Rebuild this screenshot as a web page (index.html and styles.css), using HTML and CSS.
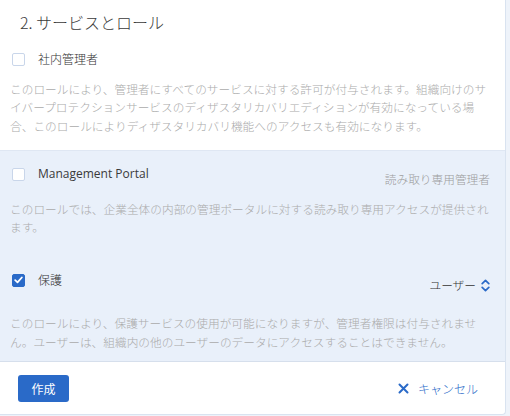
FILE: index.html
```html
<!DOCTYPE html>
<html lang="ja">
<head>
<meta charset="utf-8">
<link rel="stylesheet" href="styles.css">
</head>
<body>
<div class="panel">
  <h2 class="title">2. サービスとロール</h2>

  <section class="role role-first">
    <div class="row">
      <span class="cb"></span>
      <span class="label">社内管理者</span>
    </div>
    <p class="desc">このロールにより、管理者にすべてのサービスに対する許可が付与されます。組織向けのサ<br>イバープロテクションサービスのディザスタリカバリエディションが有効になっている場<br>合、このロールによりディザスタリカバリ機能へのアクセスも有効になります。</p>
  </section>

  <div class="blue">
    <section class="role role-mp">
      <div class="row">
        <span class="cb"></span>
        <span class="label label-en">Management Portal</span>
        <span class="right right-mp">読み取り専用管理者</span>
      </div>
      <p class="desc">このロールでは、企業全体の内部の管理ポータルに対する読み取り専用アクセスが提供され<br>ます。</p>
    </section>

    <section class="role role-protect">
      <div class="row">
        <span class="cb cb-on">
          <svg width="9" height="8" viewBox="0 0 9 8"><path d="M1.2 4.2 L3.5 6.3 L7.8 1.5" fill="none" stroke="#fff" stroke-width="1.8" stroke-linecap="round" stroke-linejoin="round"/></svg>
        </span>
        <span class="label">保護</span>
        <span class="right right-user">ユーザー
          <svg class="updown" width="9" height="13" viewBox="0 0 9 13"><path d="M1.2 4.6 L4.5 1.4 L7.8 4.6 M1.2 8.4 L4.5 11.6 L7.8 8.4" fill="none" stroke="#2a6ac8" stroke-width="1.7" stroke-linecap="round" stroke-linejoin="round"/></svg>
        </span>
      </div>
      <p class="desc">このロールにより、保護サービスの使用が可能になりますが、管理者権限は付与されませ<br>ん。ユーザーは、組織内の他のユーザーのデータにアクセスすることはできません。</p>
    </section>
  </div>

  <div class="footer">
    <button class="btn-primary">作成</button>
    <button class="btn-cancel">
      <svg width="11" height="11" viewBox="0 0 11 11"><path d="M1.5 1.5 L9.5 9.5 M9.5 1.5 L1.5 9.5" stroke="#2a6ac8" stroke-width="2" stroke-linecap="round"/></svg>
      <span>キャンセル</span>
    </button>
  </div>
</div>
</body>
</html>
```

FILE: styles.css
```css
* { box-sizing: border-box; }
html, body {
  margin: 0;
  padding: 0;
}
body {
  background: #eef3fa;
  width: 510px;
  height: 416px;
  overflow: hidden;
  font-family: "Noto Sans CJK JP", "Open Sans", sans-serif;
  color: #333;
}
.panel {
  width: 506px;
  height: 415px;
  background: #fff;
  border-right: 1px solid #d9e3f0;
  border-bottom: 1px solid #d9e3f0;
  border-bottom-right-radius: 4px;
  display: flex;
  flex-direction: column;
}
.title {
  margin: 0;
  height: 32px;
  padding: 12px 0 0 20px;
  font-size: 16px;
  line-height: 20px;
  font-weight: 300;
  color: #3a3a3a;
}
.role {
  padding: 0 10px;
}
.role-first {
  height: 118px;
  padding-top: 17px;
}
.row {
  display: flex;
  align-items: flex-start;
  padding-left: 2px;
  padding-right: 5px;
}
.cb {
  width: 13px;
  height: 13px;
  margin-top: 3.5px;
  border: 1px solid #c9d6ea;
  border-radius: 2px;
  background: #fff;
  flex: none;
  display: flex;
  align-items: center;
  justify-content: center;
}
.cb-on {
  background: #2a6ac8;
  border-color: #2a6ac8;
}
.label {
  margin-left: 13px;
  font-size: 12px;
  line-height: 20px;
  color: #333;
  font-weight: 300;
}
.label-en {
  font-family: "Open Sans", sans-serif;
  font-weight: 400;
  color: #3a3a3a;
}
.role-mp .row {
  padding-top: 1px;
}
.right {
  margin-left: auto;
  font-size: 11.7px;
  line-height: 20px;
  font-weight: 300;
  display: flex;
  align-items: center;
}
.right-mp {
  margin-top: 5px;
  color: #9c9c9c;
}
.right-user {
  margin-top: 5px;
  color: #333;
}
.updown {
  margin-left: 5px;
}
.desc {
  margin: 10.5px 0 0;
  font-size: 11.7px;
  line-height: 18.6px;
  font-weight: 300;
  color: #ababab;
  white-space: nowrap;
}
.blue {
  background: #e9f0fa;
  border-top: 1px solid #dfe7f3;
  border-bottom: 1px solid #d6dfec;
}
.role-mp {
  height: 108px;
  padding-top: 12px;
}
.role-mp .desc {
  margin-top: 10.5px;
}
.role-protect {
  padding-top: 11px;
  padding-bottom: 10px;
}
.role-protect .desc {
  margin-top: 19px;
}
.footer {
  flex: 1;
  display: flex;
  align-items: center;
  justify-content: space-between;
  padding: 0 27px 0 18px;
}
.btn-primary {
  width: 51px;
  height: 27px;
  border: none;
  border-radius: 3px;
  background: #2a6ac8;
  color: #fff;
  font-family: "Noto Sans CJK JP", sans-serif;
  font-size: 12px;
  padding: 0;
}
.btn-cancel {
  border: none;
  background: none;
  padding: 0;
  display: flex;
  align-items: center;
  gap: 9px;
  color: #2a6ac8;
  font-family: "Noto Sans CJK JP", sans-serif;
  font-size: 12px;
  font-weight: 300;
}
```
